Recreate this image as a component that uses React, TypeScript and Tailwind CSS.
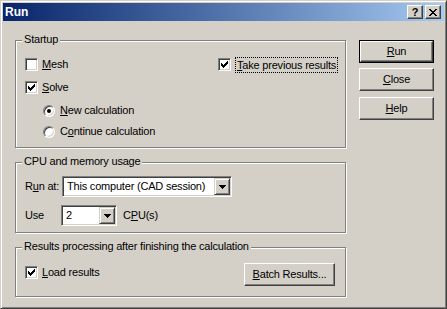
import React from 'react';

const font = { fontFamily: '"Liberation Sans", Arial, sans-serif' };

// classic 3d frames
const raised = 'border border-t-white border-l-white border-r-[#404040] border-b-[#404040] shadow-[inset_-1px_-1px_0_#808080] bg-[#d4d0c8]';
const sunken = 'border border-t-[#808080] border-l-[#808080] border-r-white border-b-white shadow-[inset_1px_1px_0_#404040,inset_-1px_-1px_0_#d4d0c8]';

const Check = () => (
  <svg width="7" height="7" viewBox="0 0 7 7" shapeRendering="crispEdges">
    <path
      fill="#000"
      d="M6 0h1v1h-1z M5 1h2v1h-2z M0 2h1v1h-1z M4 2h3v1h-3z M0 3h2v1h-2z M3 3h3v1h-3z M0 4h5v1h-5z M1 5h3v1h-3z M2 6h1v1h-1z"
    />
  </svg>
);

const Checkbox: React.FC<{ checked?: boolean }> = ({ checked }) => (
  <div className={`w-[13px] h-[13px] shrink-0 bg-white flex items-center justify-center ${sunken}`}>
    {checked && <Check />}
  </div>
);

const Radio: React.FC<{ checked?: boolean }> = ({ checked }) => (
  <div className="w-[12px] h-[12px] shrink-0 rounded-full bg-white border border-t-[#808080] border-l-[#808080] border-r-white border-b-white shadow-[inset_1px_1px_0_#404040,inset_-1px_-1px_0_#d4d0c8] flex items-center justify-center">
    {checked && <div className="w-[4px] h-[4px] rounded-full bg-black" />}
  </div>
);

const Arrow = () => (
  <svg width="7" height="4" viewBox="0 0 7 4" shapeRendering="crispEdges">
    <path fill="#000" d="M0 0h7v1h-7z M1 1h5v1h-5z M2 2h3v1h-3z M3 3h1v1h-1z" />
  </svg>
);

const Combo: React.FC<{ value: string; width: string }> = ({ value, width }) => (
  <div className={`${width} h-[21px] p-px bg-white flex items-center ${sunken}`}>
    <span className="flex-1 pl-[3px] leading-[13px] whitespace-nowrap overflow-hidden">{value}</span>
    <div className="w-[16px] h-[17px] border border-t-[#d4d0c8] border-l-[#d4d0c8] border-r-[#404040] border-b-[#404040] shadow-[inset_1px_1px_0_#fff,inset_-1px_-1px_0_#808080] bg-[#d4d0c8] flex items-center justify-center">
      <Arrow />
    </div>
  </div>
);

const Group: React.FC<{ label: string; className: string; children: React.ReactNode }> = ({ label, className, children }) => (
  <div className={`relative border border-[#808080] shadow-[inset_1px_1px_0_#fff,1px_1px_0_#fff] ${className}`}>
    <span className="absolute left-[6px] -top-[8px] px-[2px] bg-[#d4d0c8] leading-[13px] whitespace-nowrap">{label}</span>
    {children}
  </div>
);

const Button: React.FC<{ children: React.ReactNode; def?: boolean; className?: string }> = ({ children, def, className = '' }) => (
  <div className={`${def ? 'border border-black' : ''} ${className}`}>
    <div className={`${def ? 'h-[21px]' : 'h-[23px]'} flex items-center justify-center leading-[13px] ${raised}`}>
      {children}
    </div>
  </div>
);

export default function App() {
  return (
    <div
      className="w-[447px] h-[309px] bg-[#d4d0c8] border border-[#d4d0c8] border-r-[#404040] border-b-[#404040] shadow-[inset_1px_1px_0_#fff,inset_-1px_-1px_0_#808080] p-[2px] text-[11px] tracking-[-0.2px] text-black"
      style={font}
    >
      {/* title bar */}
      <div className="h-[18px] bg-gradient-to-r from-[#0a246a] to-[#a6caf0] flex items-center justify-between pl-[2px] pr-[3px]">
        <span className="text-white font-bold text-[12px] tracking-normal leading-[13px]">Run</span>
        <div className="flex gap-[2px]">
          <div className={`w-[16px] h-[14px] flex items-center justify-center ${raised}`}>
            <span className="font-bold text-[11px] leading-[11px]">?</span>
          </div>
          <div className={`w-[16px] h-[14px] flex items-center justify-center ${raised}`}>
            <svg width="8" height="7" viewBox="0 0 8 7" shapeRendering="crispEdges">
              <path
                fill="#000"
                d="M0 0h2v1h-2z M6 0h2v1h-2z M1 1h2v1h-2z M5 1h2v1h-2z M2 2h4v1h-4z M3 3h2v1h-2z M2 4h4v1h-4z M1 5h2v1h-2z M5 5h2v1h-2z M0 6h2v1h-2z M6 6h2v1h-2z"
              />
            </svg>
          </div>
        </div>
      </div>

      <div className="flex">
        {/* left column */}
        <div className="ml-[12px] mt-[19px] w-[331px]">
          <Group label="Startup" className="h-[108px] pt-[17px] pl-[9px]">
            <div className="flex items-center h-[13px]">
              <div className="w-[193px] flex items-center">
                <Checkbox />
                <span className="ml-[4px] leading-[13px]"><u>M</u>esh</span>
              </div>
              <Checkbox checked />
              <span className="ml-[4px] px-px border border-dotted border-black leading-[14px]"><u>T</u>ake previous results</span>
            </div>
            <div className="flex items-center h-[13px] mt-[10px]">
              <Checkbox checked />
              <span className="ml-[4px] leading-[13px]"><u>S</u>olve</span>
            </div>
            <div className="flex items-center h-[13px] mt-[10px] pl-[18px]">
              <Radio checked />
              <span className="ml-[5px] leading-[13px]"><u>N</u>ew calculation</span>
            </div>
            <div className="flex items-center h-[13px] mt-[8px] pl-[18px]">
              <Radio />
              <span className="ml-[5px] leading-[13px]">C<u>o</u>ntinue calculation</span>
            </div>
          </Group>

          <Group label="CPU and memory usage" className="h-[71px] mt-[14px] pt-[13px] pl-[9px]">
            <div className="flex items-center">
              <span className="w-[37px] leading-[13px]">R<u>u</u>n at:</span>
              <Combo value="This computer (CAD session)" width="w-[170px]" />
            </div>
            <div className="flex items-center mt-[8px]">
              <span className="w-[36px] leading-[13px]">Use</span>
              <Combo value="2" width="w-[56px]" />
              <span className="ml-[6px] leading-[13px]">C<u>P</u>U(s)</span>
            </div>
          </Group>

          <Group label="Results processing after finishing the calculation" className="h-[50px] mt-[14px] pt-[15px] pl-[9px] pr-[10px]">
            <div className="flex items-start justify-between">
              <div className="flex items-center mt-[3px]">
                <Checkbox checked />
                <span className="ml-[4px] leading-[13px]"><u>L</u>oad results</span>
              </div>
              <Button className="w-[91px]"><u>B</u>atch Results...</Button>
            </div>
          </Group>
        </div>

        {/* right column */}
        <div className="ml-[13px] mt-[19px] w-[75px] flex flex-col">
          <Button def><u>R</u>un</Button>
          <Button className="mt-[5px]"><u>C</u>lose</Button>
          <Button className="mt-[6px]"><u>H</u>elp</Button>
        </div>
      </div>
    </div>
  );
}
